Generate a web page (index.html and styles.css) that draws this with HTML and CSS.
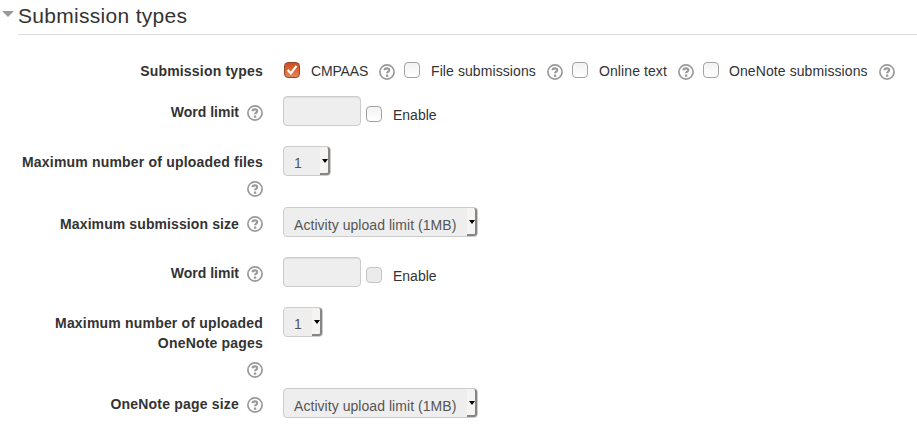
FILE: index.html
```
<!DOCTYPE html>
<html lang="en">
<head>
<meta charset="utf-8">
<title>Submission types</title>
<link rel="stylesheet" href="styles.css">
</head>
<body>
<svg class="defs" aria-hidden="true">
  <symbol id="help" viewBox="0 0 16 16">
    <circle cx="8" cy="8" r="7.1" fill="none" stroke="#999" stroke-width="1.7"/>
    <path d="M5.5 6.3C5.6 3.7 10.2 3.6 10.2 6.1C10.2 7.7 8.1 7.5 8.1 9.3" fill="none" stroke="#999" stroke-width="2.2"/>
    <rect x="6.9" y="10.6" width="2.4" height="2.2" rx=".5" fill="#999"/>
  </symbol>
</svg>
<main>
  <header class="heading"><span class="toggle"></span><h1><span>Submission types</span></h1></header>
  <form class="rows">
    <div class="row types">
      <div class="label"><b>Submission types</b></div>
      <div class="controls">
        <span class="option cmpaas"><i class="check checked"><svg viewBox="0 0 16 16"><path d="M3.6 7.9L6.8 11.3L12.5 3.8" fill="none" stroke="#fff" stroke-width="2.2"/></svg></i><span class="text">CMPAAS</span><svg class="help"><use href="#help"/></svg></span>
        <span class="option file"><i class="check"></i><span class="text">File submissions</span><svg class="help"><use href="#help"/></svg></span>
        <span class="option online"><i class="check"></i><span class="text">Online text</span><svg class="help"><use href="#help"/></svg></span>
        <span class="option onenote"><i class="check"></i><span class="text">OneNote submissions</span><svg class="help"><use href="#help"/></svg></span>
      </div>
    </div>
    <div class="row words">
      <div class="label"><b>Word limit</b><svg class="help"><use href="#help"/></svg></div>
      <div class="controls"><span class="input"></span><i class="check"></i><span class="enable">Enable</span></div>
    </div>
    <div class="row files">
      <div class="label stacked"><b>Maximum number of uploaded files</b><svg class="help"><use href="#help"/></svg></div>
      <div class="controls"><span class="select number"><span>1</span><i class="arrow"></i></span></div>
    </div>
    <div class="row size">
      <div class="label submission"><b>Maximum submission size</b><svg class="help"><use href="#help"/></svg></div>
      <div class="controls"><span class="select wide"><span>Activity upload limit (1MB)</span><i class="arrow"></i></span></div>
    </div>
    <div class="row words">
      <div class="label"><b>Word limit</b><svg class="help"><use href="#help"/></svg></div>
      <div class="controls"><span class="input"></span><i class="check disabled"></i><span class="enable">Enable</span></div>
    </div>
    <div class="row pages">
      <div class="label stacked"><b>Maximum number of uploaded<br>OneNote pages</b><svg class="help"><use href="#help"/></svg></div>
      <div class="controls"><span class="select small"><span>1</span><i class="arrow"></i></span></div>
    </div>
    <div class="row size">
      <div class="label"><b>OneNote page size</b><svg class="help"><use href="#help"/></svg></div>
      <div class="controls"><span class="select wide"><span>Activity upload limit (1MB)</span><i class="arrow"></i></span></div>
    </div>
  </form>
</main>
</body>
</html>
```
FILE: styles.css
```
* { box-sizing: border-box; }
body {
  margin: 0;
  height: 429px;
  overflow: hidden;
  background: #fff;
  color: #333;
  font: 14px/20px "Liberation Sans", Arial, sans-serif;
  white-space: nowrap;
}
.defs { display: none; }
.heading { display: flex; height: 35px; padding-left: 2px; }
.toggle {
  width: 12px;
  height: 6px;
  margin-top: 11px;
  background: #999;
  clip-path: polygon(0 0, 100% 0, 50% 100%);
}
h1 {
  flex: 1;
  margin: 0 0 0 4px;
  border-bottom: 1px solid #ddd;
  font-size: 21px;
  font-weight: normal;
  letter-spacing: .3px;
  line-height: 32px;
}
.rows {
  display: grid;
  grid-template-rows: 40px 50px 61px 50px 50px 81px 41px;
  margin-top: 21px;
}
.row { display: grid; grid-template-columns: 263px 1fr; column-gap: 20px; }
.label {
  display: flex;
  justify-content: flex-end;
  align-items: flex-start;
  padding-top: 6px;
  text-align: right;
}
.label b { letter-spacing: .19px; }
.words .label b { letter-spacing: 0; }
.label.submission b { padding-top: 1px; letter-spacing: .1px; }
.types .label { padding-top: 5px; }
.help { flex: none; width: 16px; height: 16px; margin: 3px 0 0 8px; }
.stacked { flex-direction: column; justify-content: flex-start; align-items: flex-end; }
.stacked .help { margin-top: 9px; }
.controls { display: flex; align-items: flex-start; }
.option { display: flex; padding-top: 5px; }
.option .check { margin: 1px 11px 0 1px; }
.option .help { margin-left: auto; }
.cmpaas { width: 112px; }
.cmpaas .text { letter-spacing: -.15px; }
.file, .online, .onenote { margin-left: 8px; }
.file { width: 160px; }
.file .text, .online .text, .onenote .text { letter-spacing: .09px; }
.online { width: 123px; }
.onenote { width: 193px; }
.onenote .check { margin-right: 10px; }
.check {
  flex: none;
  width: 16px;
  height: 16px;
  border: 1px solid #a2a2a2;
  border-radius: 4px;
  background: linear-gradient(#f2f2f2, #fff);
}
.checked { border-color: #94462c; background: linear-gradient(#cf4d20, #e78355); }
.checked svg { display: block; width: 16px; height: 16px; margin: -1px; }
.disabled { border-color: #c5c5c5; background: #ebebeb; }
.input {
  width: 78px;
  height: 30px;
  border: 1px solid #ccc;
  border-radius: 4px;
  background: #eee;
  box-shadow: inset 0 1px 1px rgba(0,0,0,.075);
}
.words .check { margin: 10px 11px 0 5px; }
.enable { margin-top: 9px; }
.select {
  display: flex;
  height: 30px;
  padding: 6px 0 0 10px;
  border: 1px solid #ccc;
  border-radius: 4px;
  background: #eee;
  color: #555;
}
.number { width: 48px; }
.small { width: 40px; }
.wide { width: 195px; }
.wide span { padding-top: 1px; letter-spacing: .05px; }
.arrow {
  display: flex;
  align-items: center;
  justify-content: flex-end;
  width: 10px;
  height: 28px;
  margin: -6px 0 0 auto;
  border-right: 2px solid #858585;
  border-bottom: 2px solid #858585;
  border-radius: 0 3px 3px 0;
  background: #f5f4f2;
}
.arrow::before { content: ""; width: 6px; height: 4px; margin-top: 2px; background: #000; clip-path: polygon(0 0, 100% 0, 50% 100%); }
```
